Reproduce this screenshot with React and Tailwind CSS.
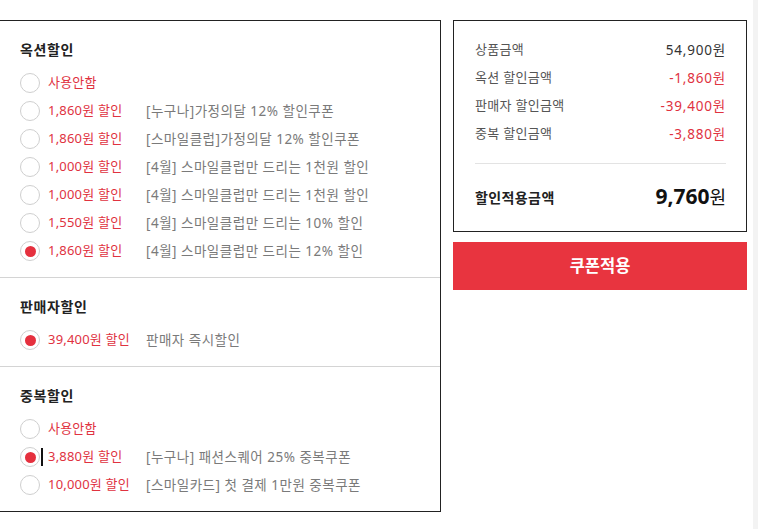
// Coupon / discount selector panel

const optionRows = [
    { label: '사용안함' },
    { label: '1,860원 할인', desc: '[누구나]가정의달 12% 할인쿠폰' },
    { label: '1,860원 할인', desc: '[스마일클럽]가정의달 12% 할인쿠폰' },
    { label: '1,000원 할인', desc: '[4월] 스마일클럽만 드리는 1천원 할인' },
    { label: '1,000원 할인', desc: '[4월] 스마일클럽만 드리는 1천원 할인' },
    { label: '1,550원 할인', desc: '[4월] 스마일클럽만 드리는 10% 할인' },
    { label: '1,860원 할인', desc: '[4월] 스마일클럽만 드리는 12% 할인', checked: true },
];

const sellerRows = [
    { label: '39,400원 할인', desc: '판매자 즉시할인', checked: true },
];

const dupRows = [
    { label: '사용안함' },
    { label: '3,880원 할인', desc: '[누구나] 패션스퀘어 25% 중복쿠폰', checked: true, caret: true },
    { label: '10,000원 할인', desc: '[스마일카드] 첫 결제 1만원 중복쿠폰' },
];

const summary = [
    { label: '상품금액', value: '54,900원' },
    { label: '옥션 할인금액', value: '-1,860원', red: true },
    { label: '판매자 할인금액', value: '-39,400원', red: true },
    { label: '중복 할인금액', value: '-3,880원', red: true },
];

function Radio({ checked }) {
    return (
        <span className="w-5 h-5 shrink-0 rounded-full border border-[#cfcfcf] bg-white flex items-center justify-center">
            {checked && <span className="w-[11px] h-[11px] rounded-full bg-[#e5303e]" />}
        </span>
    );
}

function Row({ label, desc, checked, caret }) {
    return (
        <div className="h-[28px] flex items-center pl-[20px]">
            <Radio checked={checked} />
            {caret
                ? <span className="w-[2px] h-[18px] bg-[#111] ml-px mr-[5px]" />
                : <span className="w-2" />}
            <span className="w-[98px] shrink-0 text-[13px] tracking-[0.2px] text-[#e0323f]">{label}</span>
            {desc && <span className="text-[13.5px] tracking-[0.5px] text-[#7a7a7a]">{desc}</span>}
        </div>
    );
}

function Section({ title, rows, last }) {
    return (
        <div className={`pt-[19px] pb-[12px] ${last ? '' : 'border-b border-[#d4d4d4]'}`}>
            <div className="pl-[20px] h-5 leading-5 text-[14px] tracking-[0.6px] font-bold text-[#222] mb-[9px]">{title}</div>
            {rows.map((r, i) => <Row key={i} {...r} />)}
        </div>
    );
}

export default function App() {
    return (
        <div className="flex h-[529px] bg-white" style={{ fontFamily: '"Noto Sans", "Noto Sans CJK KR", sans-serif' }}>

            {/* ── Discount options ───────────────────────────── */}
            <div className="self-start mt-[20px] w-[441px] border-t border-r border-b border-[#222]">
                <Section title="옥션할인" rows={optionRows} />
                <Section title="판매자할인" rows={sellerRows} />
                <Section title="중복할인" rows={dupRows} last />
            </div>

            {/* ── Summary + apply ────────────────────────────── */}
            <div className="self-start mt-[20px] ml-[12px] w-[294px] flex flex-col gap-[10px]">
                <div className="border border-[#222] pt-[15px] pb-[17px] pl-[21px] pr-[20px]">
                    {summary.map((s) => (
                        <div key={s.label} className="h-[28px] flex items-center justify-between text-[13px]">
                            <span className="text-[#555] tracking-[0.3px]">{s.label}</span>
                            <span className={`text-[13.5px] tracking-[0.8px] ${s.red ? 'text-[#e0323f]' : 'text-[#333]'}`}>{s.value}</span>
                        </div>
                    ))}
                    <div className="mt-[15px] mb-[16px] border-t border-[#e3e3e3]" />
                    <div className="h-[34px] flex items-center justify-between">
                        <span className="text-[14px] tracking-[0.4px] font-bold text-[#222]">할인적용금액</span>
                        <span className="text-[#111]">
                            <span className="text-[21px] font-bold">9,760</span>
                            <span className="text-[18px]">원</span>
                        </span>
                    </div>
                </div>
                <button className="h-[48px] bg-[#e8343f] text-white text-[16.5px] font-bold">쿠폰적용</button>
            </div>

            <div className="ml-auto w-[5px] bg-[#f3f3f3]" />
        </div>
    );
}
